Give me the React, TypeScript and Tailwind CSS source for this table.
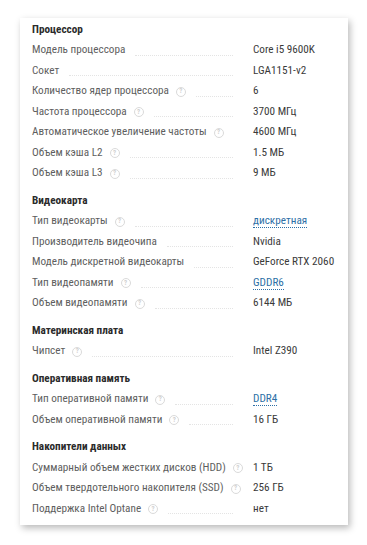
import React from "react";

type Row = { label: string; value: string; help?: boolean; link?: boolean };
type Section = { title: string; rows: Row[] };

const sections: Section[] = [
  {
    title: "Процессор",
    rows: [
      { label: "Модель процессора", value: "Core i5 9600K" },
      { label: "Сокет", value: "LGA1151-v2" },
      { label: "Количество ядер процессора", value: "6", help: true },
      { label: "Частота процессора", value: "3700 МГц", help: true },
      { label: "Автоматическое увеличение частоты", value: "4600 МГц", help: true },
      { label: "Объем кэша L2", value: "1.5 МБ", help: true },
      { label: "Объем кэша L3", value: "9 МБ", help: true },
    ],
  },
  {
    title: "Видеокарта",
    rows: [
      { label: "Тип видеокарты", value: "дискретная", help: true, link: true },
      { label: "Производитель видеочипа", value: "Nvidia" },
      { label: "Модель дискретной видеокарты", value: "GeForce RTX 2060" },
      { label: "Тип видеопамяти", value: "GDDR6", help: true, link: true },
      { label: "Объем видеопамяти", value: "6144 МБ", help: true },
    ],
  },
  {
    title: "Материнская плата",
    rows: [{ label: "Чипсет", value: "Intel Z390", help: true }],
  },
  {
    title: "Оперативная память",
    rows: [
      { label: "Тип оперативной памяти", value: "DDR4", help: true, link: true },
      { label: "Объем оперативной памяти", value: "16 ГБ", help: true },
    ],
  },
  {
    title: "Накопители данных",
    rows: [
      { label: "Суммарный объем жестких дисков (HDD)", value: "1 ТБ", help: true },
      { label: "Объем твердотельного накопителя (SSD)", value: "256 ГБ", help: true },
      { label: "Поддержка Intel Optane", value: "нет", help: true },
    ],
  },
];

function HelpIcon() {
  return (
    <span className="ml-[7px] inline-flex h-[10px] w-[10px] shrink-0 items-center justify-center rounded-full border border-[#dadada] text-[7px] font-bold leading-none text-[#d0d0d0]">
      ?
    </span>
  );
}

function SpecRow({ row }: { row: Row }) {
  return (
    <div className="flex h-[20.5px] items-center">
      <div className="flex w-[211px] shrink-0 items-center">
        <span className="whitespace-nowrap text-[#5e5e5e]">{row.label}</span>
        {row.help && <HelpIcon />}
        <span className="mx-[10px] mt-[9px] min-w-0 flex-1 border-b border-dotted border-[#e4e4e4]" />
      </div>
      <div className="ml-[10px] whitespace-nowrap text-[#3a3a3a]">
        {row.link ? (
          <span className="border-b border-dotted border-[#2d6fa6] text-[#2d6fa6]">{row.value}</span>
        ) : (
          row.value
        )}
      </div>
    </div>
  );
}

export default function App() {
  return (
    <div
      className="min-h-[545px] w-[367px] bg-white pl-[20px] pt-[18px]"
      style={{ fontFamily: "'Roboto Condensed', Roboto, sans-serif" }}
    >
      <div className="w-[328px] bg-white pb-[5px] pl-[12px] pt-[2px] text-[11.2px] shadow-[2px_3px_7px_rgba(0,0,0,0.28)]">
        {sections.map((s, i) => (
          <div key={s.title} className={i > 0 ? "mt-[7px]" : ""}>
            <div className="flex h-[20.5px] items-center font-bold text-[#2b2b2b]">{s.title}</div>
            {s.rows.map((r) => (
              <SpecRow key={r.label} row={r} />
            ))}
          </div>
        ))}
      </div>
    </div>
  );
}
